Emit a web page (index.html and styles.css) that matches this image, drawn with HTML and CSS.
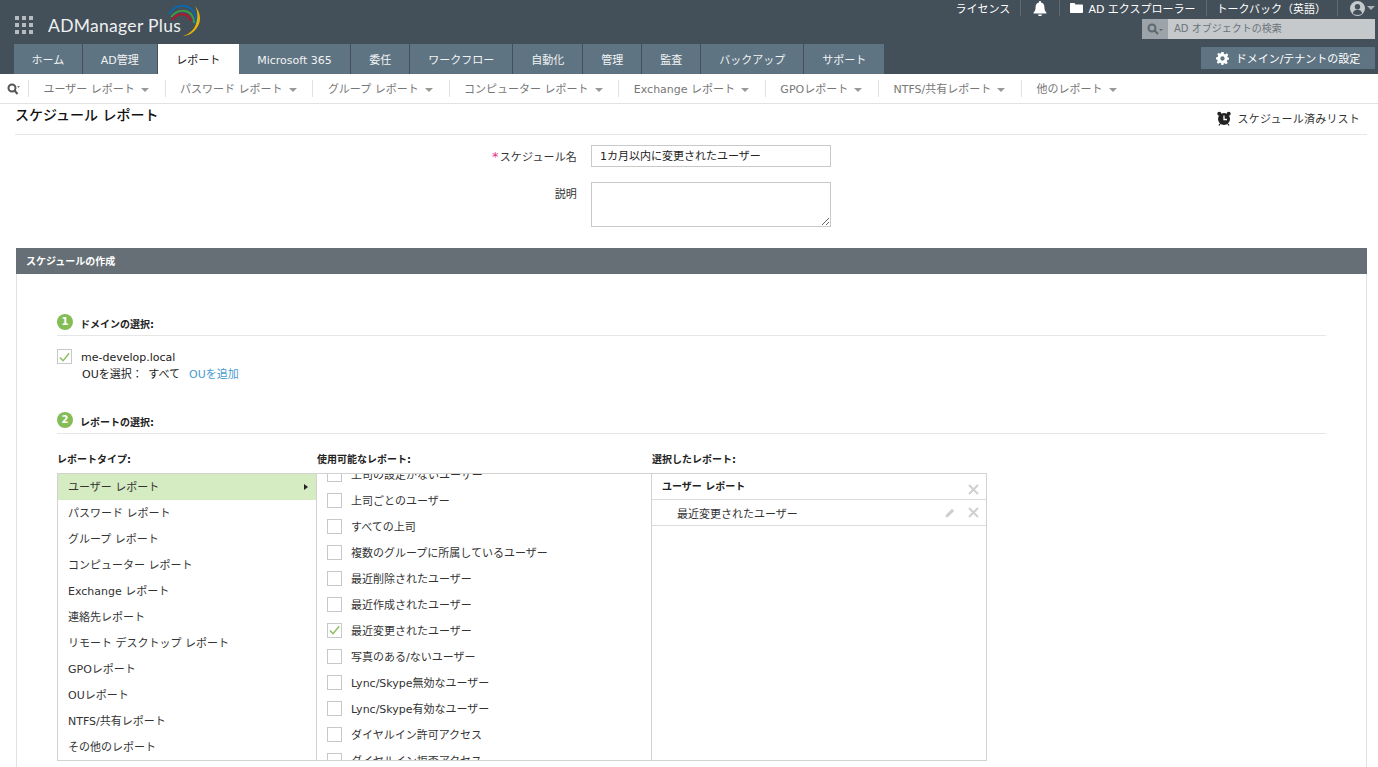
FILE: index.html
```html
<!DOCTYPE html>
<html lang="ja">
<head>
<meta charset="utf-8">
<title>ADManager Plus</title>
<link rel="stylesheet" href="styles.css">
</head>
<body>
<header class="header">
  <div class="brand">
    <div class="apps"><i></i><i></i><i></i><i></i><i></i><i></i><i></i><i></i><i></i></div>
    <div class="logo">
      <span>ADManager Plus</span>
      <svg class="arcs" width="36" height="34" viewBox="0 0 36 34" fill="none">
        <path d="M1 12C5 6 11 3 17 4C26 6 29 14 28 22" stroke="#0f67ab" stroke-width="2" transform="translate(0 -1)"/>
        <path d="M3 14C7 9 12 7 17 8C23 9 26 14 26 20" stroke="#3f9b48" stroke-width="2"/>
        <path d="M4 17C8 12 13 10 18 12C20 13 22 15 23 18" stroke="#b3162e" stroke-width="2"/>
        <path d="M27 3C33 10 34 19 28 26C24 31 19 33 15 33C21 31 26 27 28 21C30 15 30 9 27 3Z" fill="#eab308"/>
      </svg>
    </div>
  </div>
  <div class="top-right">
    <div class="util">
      <a class="util-item">ライセンス</a>
      <a class="util-item bell-item">
        <svg width="14" height="15" viewBox="0 0 14 15"><path fill="#fff" d="M7 0c.6 0 1 .4 1 1v.6c2.200.5 3.400 2.200 3.400 4.400 0 3 .8 4.300 2 5.500v.9H.6v-.9c1.200-1.200 2-2.500 2-5.500 0-2.200 1.200-3.900 3.400-4.400V1c0-.6.400-1 1-1zM5 13.500h4c0 1-.9 1.500-2 1.500s-2-.5-2-1.500z"/></svg>
      </a>
      <a class="util-item">
        <svg class="folder" width="13" height="10" viewBox="0 0 13 10"><path fill="#fff" d="M0 1c0-.6.4-1 1-1h3.500l1 1.500H12c.6 0 1 .4 1 1V9c0 .6-.4 1-1 1H1c-.6 0-1-.4-1-1z"/></svg>
        AD エクスプローラー
      </a>
      <a class="util-item talk">トークバック（英語）</a>
      <a class="util-item user-item">
        <svg width="15" height="15" viewBox="0 0 15 15"><circle cx="7.500" cy="7.500" r="7.500" fill="#c5cacd"/><circle cx="7.500" cy="5.700" r="2.700" fill="#434f59"/><path fill="#434f59" d="M2.800 12.300c.6-2.400 2.500-3.500 4.700-3.500s4.100 1.100 4.700 3.500C11.300 13.300 9.500 14 7.500 14s-3.800-.7-4.700-1.700z"/></svg>
        <b class="caret caret-light"></b>
      </a>
    </div>
    <div class="search">
      <span class="search-btn">
        <svg width="16" height="12" viewBox="0 0 16 12" fill="none"><circle cx="5" cy="5" r="3.500" stroke="#5d676e" stroke-width="2"/><path d="M7.500 7.500L11 11" stroke="#5d676e" stroke-width="2"/><path fill="#5d676e" d="M12 6h4l-2 2z"/></svg>
      </span>
      <span class="search-input">AD オブジェクトの検索</span>
    </div>
  </div>
  <nav class="tabs">
    <a class="tab tab-home">ホーム</a>
    <a class="tab">AD管理</a>
    <a class="tab active">レポート</a>
    <a class="tab tab-ms">Microsoft 365</a>
    <a class="tab">委任</a>
    <a class="tab">ワークフロー</a>
    <a class="tab">自動化</a>
    <a class="tab">管理</a>
    <a class="tab">監査</a>
    <a class="tab">バックアップ</a>
    <a class="tab">サポート</a>
    <a class="domain-btn">
      <svg width="13" height="13" viewBox="0 0 24 24"><path fill="#fff" fill-rule="evenodd" d="M10 0h4l.7 3.400 2.300 1 2.900-1.900 2.800 2.800-1.900 2.900 1 2.300L24 10v4l-3.200.7-1 2.300 1.900 2.900-2.800 2.800-2.900-1.900-2.300 1L14 24h-4l-.7-3.200-2.300-1-2.900 1.900-2.800-2.800 1.900-2.900-1-2.300L0 14v-4l3.200-.7 1-2.300-1.900-2.900 2.800-2.800L7 3.200l2.300-1zM12 8a4 4 0 100 8 4 4 0 000-8z"/></svg>
      ドメイン/テナントの設定
    </a>
  </nav>
</header>

<nav class="subnav">
  <span class="subsearch">
    <svg width="13" height="12" viewBox="0 0 13 12" fill="none"><circle cx="5" cy="5" r="3.500" stroke="#555" stroke-width="2"/><path d="M7.500 7.500L10.500 11" stroke="#555" stroke-width="2"/><path fill="#777" d="M10 3h3l-1.500 2z"/></svg>
  </span>
  <a class="sub">ユーザー レポート<b class="caret"></b></a>
  <a class="sub">パスワード レポート<b class="caret"></b></a>
  <a class="sub">グループ レポート<b class="caret"></b></a>
  <a class="sub">コンピューター レポート<b class="caret"></b></a>
  <a class="sub">Exchange レポート<b class="caret"></b></a>
  <a class="sub">GPOレポート<b class="caret"></b></a>
  <a class="sub">NTFS/共有レポート<b class="caret"></b></a>
  <a class="sub">他のレポート<b class="caret"></b></a>
</nav>

<main class="main">
  <div class="title-row">
    <h1>スケジュール レポート</h1>
    <a class="sched-link">
      <svg width="14" height="15" viewBox="0 0 14 15"><circle cx="7" cy="8" r="6" fill="#222"/><circle cx="2.300" cy="2.800" r="2" fill="#222"/><circle cx="11.700" cy="2.800" r="2" fill="#222"/><path d="M7 4.500V8.500H10" stroke="#fff" stroke-width="1.300" fill="none"/><path d="M3 13l-1 1.500M11 13l1 1.500" stroke="#222" stroke-width="1.300"/></svg>
      スケジュール済みリスト
    </a>
  </div>

  <div class="form-row">
    <label class="form-label"><em>*</em>スケジュール名</label>
    <div class="field">1カ月以内に変更されたユーザー</div>
  </div>
  <div class="form-row desc-row">
    <label class="form-label">説明</label>
    <textarea class="area"></textarea>
  </div>

  <section class="panel">
    <h2 class="panel-head">スケジュールの作成</h2>
    <div class="panel-body">
      <div class="step">
        <span class="num">1</span><h3>ドメインの選択:</h3>
      </div>
      <div class="domain">
        <span class="check on"><svg width="14" height="12" viewBox="0 0 14 12" fill="none"><path d="M2 6.500L5.500 10L12 2" stroke="#8bc162" stroke-width="1.600"/></svg></span>
        <div class="domain-text">
          <div>me-develop.local</div>
          <div class="ou">OUを選択： <span class="all">すべて</span><a class="link">OUを追加</a></div>
        </div>
      </div>

      <div class="step step2">
        <span class="num">2</span><h3>レポートの選択:</h3>
      </div>

      <div class="col-heads">
        <div class="ch c1">レポートタイプ:</div>
        <div class="ch c2">使用可能なレポート:</div>
        <div class="ch c3">選択したレポート:</div>
      </div>
      <div class="picker">
        <ul class="types">
          <li class="type active">ユーザー レポート<b class="arrow"></b></li>
          <li class="type">パスワード レポート</li>
          <li class="type">グループ レポート</li>
          <li class="type">コンピューター レポート</li>
          <li class="type">Exchange レポート</li>
          <li class="type">連絡先レポート</li>
          <li class="type">リモート デスクトップ レポート</li>
          <li class="type">GPOレポート</li>
          <li class="type">OUレポート</li>
          <li class="type">NTFS/共有レポート</li>
          <li class="type">その他のレポート</li>
        </ul>
        <div class="avail">
          <ul class="avail-list">
            <li class="opt"><span class="check"></span>上司の設定がないユーザー</li>
            <li class="opt"><span class="check"></span>上司ごとのユーザー</li>
            <li class="opt"><span class="check"></span>すべての上司</li>
            <li class="opt"><span class="check"></span>複数のグループに所属しているユーザー</li>
            <li class="opt"><span class="check"></span>最近削除されたユーザー</li>
            <li class="opt"><span class="check"></span>最近作成されたユーザー</li>
            <li class="opt"><span class="check on"><svg width="14" height="12" viewBox="0 0 14 12" fill="none"><path d="M2 6.500L5.500 10L12 2" stroke="#8bc162" stroke-width="1.600"/></svg></span>最近変更されたユーザー</li>
            <li class="opt"><span class="check"></span>写真のある/ないユーザー</li>
            <li class="opt"><span class="check"></span>Lync/Skype無効なユーザー</li>
            <li class="opt"><span class="check"></span>Lync/Skype有効なユーザー</li>
            <li class="opt"><span class="check"></span>ダイヤルイン許可アクセス</li>
            <li class="opt"><span class="check"></span>ダイヤルイン拒否アクセス</li>
          </ul>
        </div>
        <div class="chosen">
          <div class="chosen-row group">
            <span>ユーザー レポート</span>
            <svg class="x" width="11" height="11" viewBox="0 0 11 11"><path d="M1 1L10 10M10 1L1 10" stroke="#cfcfcf" stroke-width="2"/></svg>
          </div>
          <div class="chosen-row item">
            <span>最近変更されたユーザー</span>
            <svg class="pen" width="10" height="10" viewBox="0 0 10 10"><path fill="#cfcfcf" d="M7 .8L9.200 3 3.400 8.800.5 9.500l.7-2.900z"/></svg>
            <svg class="x" width="11" height="11" viewBox="0 0 11 11"><path d="M1 1L10 10M10 1L1 10" stroke="#cfcfcf" stroke-width="2"/></svg>
          </div>
        </div>
      </div>
    </div>
  </section>
</main>
</body>
</html>
```
FILE: styles.css
```css
* { box-sizing: border-box; }
html, body { margin: 0; padding: 0; height: 767px; overflow: hidden; }
body {
  font-family: "DejaVu Sans", "Noto Sans CJK JP", sans-serif;
  font-size: 11px;
  color: #222;
  background: #fff;
}
a { color: inherit; text-decoration: none; }
ul { list-style: none; margin: 0; padding: 0; }
h1, h2, h3 { margin: 0; }

.header {
  position: relative;
  height: 74px;
  background: #434f59;
  color: #fff;
}
.brand { display: flex; height: 44px; padding: 16px 0 0 15px; }
.apps {
  display: grid;
  grid-template-columns: repeat(3, 4px);
  grid-auto-rows: 4px;
  gap: 3px;
  height: 18px;
}
.apps i { background: #b6bcc0; display: block; }
.logo {
  position: relative;
  margin-left: 15px;
  font-family: "Lato", sans-serif;
  font-size: 17.500px;
  line-height: 20px;
  letter-spacing: .3px;
  color: #eef0f1;
}
.arcs { position: absolute; left: 120px; top: -13px; }

.top-right {
  position: absolute;
  right: 0;
  top: 0;
  display: flex;
  flex-direction: column;
  align-items: flex-end;
}
.util { display: flex; height: 19px; align-items: center; padding-right: 3px; }
.util-item {
  display: flex;
  align-items: center;
  gap: 5px;
  height: 16px;
  padding: 0 10px;
  border-right: 1px solid #5d6973;
  margin-top: -3px;
}
.bell-item { padding: 0 12px; }
.talk { padding-right: 11px; }
.user-item { border: 0; padding: 0 0 0 12px; gap: 2px; }
.search { display: flex; width: 233px; height: 20px; margin-right: 3px; }
.search-btn {
  width: 26px;
  background: #9ca4a9;
  display: flex;
  align-items: center;
  justify-content: center;
}
.search-input {
  flex: 1;
  background: #c5c9cc;
  color: #6b7278;
  font-size: 10px;
  line-height: 20px;
  padding-left: 6px;
}
.caret {
  display: inline-block;
  width: 0;
  height: 0;
  border-left: 4px solid transparent;
  border-right: 4px solid transparent;
  border-top: 4px solid #999;
  margin-left: 6px;
  vertical-align: 1px;
}
.caret-light { border-top-color: #aab0b5; margin-left: 0; }

.tabs { display: flex; height: 30px; padding-left: 14px; align-items: stretch; }
.tab {
  background: #5f7482;
  margin-right: 1px;
  line-height: 33px;
  padding: 0 18px;
  color: #f1f3f4;
  white-space: nowrap;
}
.tab-home { padding: 0 17.500px; }
.tab-ms { padding: 0 18.500px; }
.tab.active { background: #fff; color: #222; margin-right: 0; padding: 0 18.500px; }
.domain-btn {
  margin-left: auto;
  margin-right: 3px;
  margin-top: 3px;
  height: 22px;
  width: 174px;
  background: #5f7482;
  display: flex;
  align-items: center;
  justify-content: center;
  gap: 7px;
}

.subnav {
  height: 30px;
  border-bottom: 1px solid #e2e2e2;
  display: flex;
  align-items: center;
  padding: 0 0 0 7px;
  color: #777;
}
.subsearch { display: flex; width: 21px; }
.sub {
  display: block;
  height: 17px;
  line-height: 20px;
  padding: 0 15.800px 0 14.500px;
  border-left: 1px solid #e2e2e2;
  white-space: nowrap;
}

.main { padding: 0 11px 0 16px; }
.title-row {
  height: 31px;
  margin-left: -1px;
  border-bottom: 1px solid #e6e6e6;
  display: flex;
  justify-content: space-between;
  align-items: flex-start;
}
.title-row h1 { font-size: 14px; font-weight: 500; line-height: 22px; color: #111; }
.sched-link {
  display: flex;
  align-items: center;
  gap: 7px;
  margin: 6px 7px 0 0;
  height: 16px;
  color: #333;
  letter-spacing: .2px;
}

.form-row { display: flex; margin-top: 10px; height: 22px; }
.desc-row { margin-top: 15px; height: 45px; }
.form-label { width: 561px; text-align: right; line-height: 23px; color: #333; letter-spacing: .15px; }
.desc-row .form-label { line-height: 25px; }
.form-label em { color: #e8308a; font-style: normal; font-size: 13px; margin-right: 1px; }
.field {
  margin-left: 14px;
  width: 240px;
  height: 22px;
  border: 1px solid #c9c9c9;
  line-height: 21px;
  padding-left: 8px;
}
.area {
  display: block;
  margin-left: 14px;
  width: 240px;
  height: 45px;
  border: 1px solid #c9c9c9;
  border-radius: 0;
}

.panel { margin-top: 21px; }
.panel-head {
  height: 26px;
  background: #666f75;
  color: #fff;
  font-size: 10px;
  font-weight: 700;
  line-height: 27px;
  padding-left: 10px;
}
.panel-body {
  height: 600px;
  border-left: 1px solid #e2e2e2;
  border-right: 1px solid #e2e2e2;
  padding: 40px 40px 0 40px;
}
.step {
  display: flex;
  align-items: center;
  height: 22px;
  border-bottom: 1px solid #e6e6e6;
  padding-bottom: 6px;
}
.step2 { margin-top: 29px; }
.num {
  width: 16px;
  height: 16px;
  margin-top: 1px;
  border-radius: 50%;
  background: #84bd55;
  color: #fff;
  font-size: 10px;
  font-weight: 700;
  line-height: 16px;
  text-align: center;
}
.step h3 { font-size: 10px; font-weight: 700; margin-left: 7px; color: #222; padding-top: 3px; }

.domain { display: flex; margin-top: 13px; }
.check {
  flex: none;
  width: 15px;
  height: 15px;
  border: 1px solid #c8c8c8;
  background: #fff;
  display: flex;
  align-items: center;
  justify-content: center;
}
.domain-text { margin-left: 9px; line-height: 16px; padding-top: 1px; }
.ou { margin-left: 1px; margin-top: 1px; }
.all { margin-left: 2px; }
.link { color: #4a9ad0; margin-left: 9px; }

.col-heads { display: flex; margin-top: 17px; height: 22px; font-size: 10px; font-weight: 700; }
.c1 { width: 260px; }
.c2 { width: 335px; }

.picker {
  display: flex;
  width: 930px;
  height: 288px;
  border: 1px solid #d2d2d2;
}
.types { width: 258px; flex: none; }
.type {
  position: relative;
  height: 26px;
  line-height: 28px;
  padding-left: 10px;
  color: #333;
}
.type.active { background: #d5ecc2; }
.arrow {
  position: absolute;
  right: 8px;
  top: 10px;
  border-left: 4px solid #222;
  border-top: 3.500px solid transparent;
  border-bottom: 3.500px solid transparent;
}
.avail {
  width: 336px;
  flex: none;
  overflow: hidden;
  border-left: 1px solid #d2d2d2;
  border-right: 1px solid #d2d2d2;
}
.avail-list { margin-top: -13px; }
.opt {
  display: flex;
  align-items: center;
  height: 26px;
  padding-left: 10px;
  gap: 9px;
  color: #333;
}
.chosen { flex: 1; }
.chosen-row {
  display: flex;
  align-items: center;
  height: 26px;
  border-bottom: 1px solid #dcdcdc;
  padding-right: 7px;
}
.chosen-row span { flex: 1; }
.group { font-size: 10px; font-weight: 700; padding-left: 10px; line-height: 24px; }
.group .x { margin-top: 5px; }
.item { padding-left: 25px; color: #333; }
.pen { margin-right: 13px; }
```
